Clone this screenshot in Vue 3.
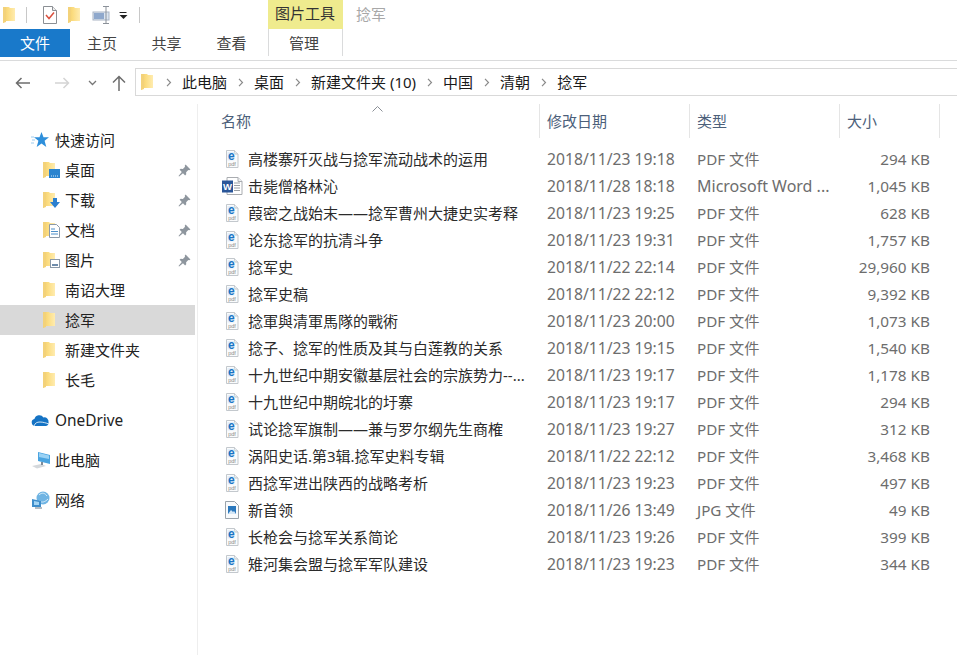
<script setup>
const crumbs = ['此电脑', '桌面', '新建文件夹 (10)', '中国', '清朝', '捻军']
const quick = [
  { name: '桌面', icon: 'desk', pin: true },
  { name: '下载', icon: 'down', pin: true },
  { name: '文档', icon: 'docs', pin: true },
  { name: '图片', icon: 'pics', pin: true },
  { name: '南诏大理', icon: '' },
  { name: '捻军', icon: '', active: true },
  { name: '新建文件夹', icon: '' },
  { name: '长毛', icon: '' },
]
const files = [
  ['pdf', '高楼寨歼灭战与捻军流动战术的运用', '2018/11/23 19:18', 'PDF 文件', '294 KB'],
  ['word', '击毙僧格林沁', '2018/11/28 18:18', 'Microsoft Word ...', '1,045 KB'],
  ['pdf', '葭密之战始末——捻军曹州大捷史实考释', '2018/11/23 19:25', 'PDF 文件', '628 KB'],
  ['pdf', '论东捻军的抗清斗争', '2018/11/23 19:31', 'PDF 文件', '1,757 KB'],
  ['pdf', '捻军史', '2018/11/22 22:14', 'PDF 文件', '29,960 KB'],
  ['pdf', '捻军史稿', '2018/11/22 22:12', 'PDF 文件', '9,392 KB'],
  ['pdf', '捻軍與清軍馬隊的戰術', '2018/11/23 20:00', 'PDF 文件', '1,073 KB'],
  ['pdf', '捻子、捻军的性质及其与白莲教的关系', '2018/11/23 19:15', 'PDF 文件', '1,540 KB'],
  ['pdf', '十九世纪中期安徽基层社会的宗族势力--...', '2018/11/23 19:17', 'PDF 文件', '1,178 KB'],
  ['pdf', '十九世纪中期皖北的圩寨', '2018/11/23 19:17', 'PDF 文件', '294 KB'],
  ['pdf', '试论捻军旗制——兼与罗尔纲先生商榷', '2018/11/23 19:27', 'PDF 文件', '312 KB'],
  ['pdf', '涡阳史话.第3辑.捻军史料专辑', '2018/11/22 22:12', 'PDF 文件', '3,468 KB'],
  ['pdf', '西捻军进出陕西的战略考析', '2018/11/23 19:23', 'PDF 文件', '497 KB'],
  ['jpg', '新首领', '2018/11/26 13:49', 'JPG 文件', '49 KB'],
  ['pdf', '长枪会与捻军关系简论', '2018/11/23 19:26', 'PDF 文件', '399 KB'],
  ['pdf', '雉河集会盟与捻军军队建设', '2018/11/23 19:23', 'PDF 文件', '344 KB'],
]
</script>

<template>
  <div class="win">
    <svg class="defs" aria-hidden="true">
      <defs>
        <linearGradient id="fg" x1="0" y1="0" x2="1" y2="0">
          <stop offset="0" stop-color="#f2cc68" />
          <stop offset="0.4" stop-color="#fbdc80" />
          <stop offset="1" stop-color="#ffecb0" />
        </linearGradient>
        <symbol id="folder" viewBox="0 0 12 16">
          <path d="M0 0h6l1 1h5v13H3l-3 2z" fill="url(#fg)" />
          <path d="M0 0h3v15l-3 1z" fill="#f3d27a" />
        </symbol>
        <symbol id="pdf" viewBox="0 0 14 18">
          <path d="M1.500 .5h8l3.500 3.500v13.500h-11.500z" fill="#fafbfc" stroke="#c3c8cd" />
          <path d="M9.500 .5v3.500h3.500" fill="#e8ecf0" stroke="#c3c8cd" />
          <rect x="2.500" y="2" width="7" height="8.500" fill="#e3f0fa" />
          <text x="6.300" y="10" font-size="12" font-weight="700" fill="#1b74c4" text-anchor="middle" font-family="Liberation Sans">e</text>
          <text x="7" y="15.800" font-size="5.500" fill="#8a8a8a" text-anchor="middle" font-family="Liberation Sans">pdf</text>
        </symbol>
        <symbol id="word" viewBox="0 0 22 18">
          <path d="M6 .5h11l4 4v13H6z" fill="#fff" stroke="#a9acb0" />
          <path d="M17 .5v4h4" fill="#eef0f2" stroke="#a9acb0" />
          <path d="M13 6h6M13 8.500h6M13 11h6M13 13.500h6" stroke="#9a9fa5" />
          <rect x="1" y="3.500" width="11" height="12" fill="#2a5699" />
          <text x="6.500" y="13" font-size="9.500" font-weight="700" fill="#fff" text-anchor="middle" font-family="Liberation Sans">W</text>
        </symbol>
        <symbol id="jpg" viewBox="0 0 14 18">
          <path d="M.5 .5h9l4 4v13H.5z" fill="#f8fafc" stroke="#9aa3ab" />
          <rect x="3" y="5" width="8" height="8" fill="#2a78bd" />
          <path d="M3 13l3-4 2 2 1-1 2 3z" fill="#d5e7f6" />
        </symbol>
        <symbol id="pin" viewBox="0 0 12 12">
          <path d="M7 .5l4.500 4.500-1.200.8-.8-.3-2 2 .1 2-1 1-2-2L1 11.500l-.5-.5 3-3.600-2-2 1-1 2 .1 2-2-.3-.8z" fill="#8e969e" />
        </symbol>
      </defs>
    </svg>

    <div class="title">
      <svg class="qa f1" width="12" height="16"><use href="#folder" /></svg>
      <i class="vsep s1"></i>
      <svg class="qa q2" width="16" height="18" viewBox="0 0 16 18">
        <path d="M1.500 .5h9l4 4v13h-13z" fill="#fff" stroke="#8b8f94" />
        <path d="M10.500 .5v4h4" fill="#eee" stroke="#8b8f94" />
        <path d="M4 9l3 3.500 5-6" fill="none" stroke="#d9503f" stroke-width="1.500" />
      </svg>
      <svg class="qa q3" width="12" height="16"><use href="#folder" /></svg>
      <svg class="qa q4" width="19" height="18" viewBox="0 0 19 18">
        <rect x="1" y="6" width="16" height="8" fill="#dbe5f1" stroke="#a9b4c4" />
        <rect x="2" y="7" width="10" height="6" fill="#8fa8cc" />
        <path d="M11 .5h6M14 .5v17M11 17.500h6" stroke="#8b9199" fill="none" />
      </svg>
      <svg class="qa q5" width="9" height="7" viewBox="0 0 9 7">
        <path d="M.500 .5h7" stroke="#222" />
        <path d="M.500 3h8l-4 4z" fill="#222" />
      </svg>
      <i class="vsep s2"></i>
      <div class="tool">图片工具</div>
      <div class="wintitle">捻军</div>
    </div>

    <div class="tabs">
      <div class="tab file">文件</div>
      <div class="tab t1">主页</div>
      <div class="tab t2">共享</div>
      <div class="tab t2">查看</div>
      <div class="tab manage">管理</div>
    </div>

    <div class="nav">
      <svg class="ni back" width="16" height="12" viewBox="0 0 16 12"><path d="M15 6H1.500M6.500 1l-5 5 5 5" fill="none" stroke="#6d6d6d" stroke-width="1.500" /></svg>
      <svg class="ni fwd" width="16" height="12" viewBox="0 0 16 12"><path d="M1 6h13.500M9.500 1l5 5-5 5" fill="none" stroke="#d4d4d4" stroke-width="1.500" /></svg>
      <svg class="ni dn" width="9" height="6" viewBox="0 0 9 6"><path d="M1 1l3.500 3.500L8 1" fill="none" stroke="#777" stroke-width="1.300" /></svg>
      <svg class="ni up" width="14" height="16" viewBox="0 0 14 16"><path d="M7 16V1.500M1 7.500l6-6 6 6" fill="none" stroke="#6d6d6d" stroke-width="1.500" /></svg>
      <div class="addr">
        <svg class="addr-f" width="12" height="16"><use href="#folder" /></svg>
        <template v-for="c in crumbs" :key="c">
          <svg class="chev" width="6" height="9" viewBox="0 0 6 9"><path d="M1 .8l3.500 3.700L1 8.200" fill="none" stroke="#8a8a8a" stroke-width="1.200" /></svg>
          <span class="crumb">{{ c }}</span>
        </template>
      </div>
    </div>

    <div class="body">
      <aside class="side">
        <div class="item top">
          <svg class="ticon" width="20" height="16" viewBox="0 0 20 16">
            <path d="M10.500 0l2 5.300H18l-4.400 3.500L15.300 15l-4.800-3.400L5.700 15l1.700-6.200L3 5.300h5.500z" fill="#2e8fdb" />
            <path d="M0 5h3M1 8h3M0 11h3" stroke="#9ccbee" />
          </svg>
          <span>快速访问</span>
        </div>
        <div v-for="q in quick" :key="q.name" class="item sub" :class="{ active: q.active }">
          <span class="fwrap">
            <svg width="12" height="16"><use href="#folder" /></svg>
            <svg v-if="q.icon === 'desk'" class="ov" width="11" height="9" viewBox="0 0 11 9"><rect width="11" height="9" fill="#2b84cf" /><path d="M2 7h7" stroke="#d7ebfb" stroke-dasharray="1 1" /></svg>
            <svg v-if="q.icon === 'down'" class="ov" width="10" height="10" viewBox="0 0 10 10"><path d="M3 0h4v4h3L5 10 0 4h3z" fill="#2b7fd0" /></svg>
            <svg v-if="q.icon === 'docs'" class="ov" width="11" height="14" viewBox="0 0 11 14"><path d="M.5.5h7l3 3v10H.5z" fill="#fff" stroke="#8b99a8" /><path d="M2 5h4M2 7.500h7M2 10h7" stroke="#4d8fc9" /></svg>
            <svg v-if="q.icon === 'pics'" class="ov" width="10" height="9" viewBox="0 0 10 9"><rect x=".5" y=".5" width="9" height="8" fill="#fff" stroke="#8b99a8" /><path d="M2 5h6v2H2z" fill="#6f8cab" /></svg>
          </span>
          <span class="lbl">{{ q.name }}</span>
          <svg v-if="q.pin" class="pin" width="13" height="13"><use href="#pin" /></svg>
        </div>
        <div class="item top gap">
          <svg class="ticon" width="20" height="12" viewBox="0 0 20 12">
            <path d="M4 12a3.500 3.500 0 0 1-.6-6.900A5 5 0 0 1 12.500 3.500 4 4 0 0 1 17.500 8 3 3 0 0 1 15 12z" fill="#1573c4" />
            <path d="M3 12c1-3 3-4 6-4s6 1 9 2" fill="none" stroke="#fff" stroke-width=".8" />
          </svg>
          <span class="latin">OneDrive</span>
        </div>
        <div class="item top gap">
          <svg class="ticon" width="20" height="18" viewBox="0 0 20 18">
            <path d="M7 1l12 3v9L7 10z" fill="#4aa4e0" />
            <path d="M8 2l10 2.500V8L8 6z" fill="#9ad2f5" />
            <path d="M1 15l9-2 5 2-9 2.500z" fill="#d4d8dc" />
            <path d="M11 11v3" stroke="#7f8c99" stroke-width="2" />
          </svg>
          <span>此电脑</span>
        </div>
        <div class="item top gap">
          <svg class="ticon" width="20" height="18" viewBox="0 0 20 18">
            <circle cx="12" cy="7" r="6.500" fill="#6fb4e3" />
            <path d="M8 4c3-3 6-2 8 1M8 10c3 2 6 1 9-2" fill="none" stroke="#d8eefb" />
            <path d="M1 8l9 2v6H1z" fill="#3f8ecb" />
            <path d="M3 10l5 1v3H3z" fill="#a4d5f4" />
            <path d="M4 17h7" stroke="#9aa4ae" stroke-width="1.500" />
          </svg>
          <span>网络</span>
        </div>
      </aside>

      <main class="list">
        <div class="head">
          <div class="h h-name">名称
            <svg class="sort" width="11" height="6" viewBox="0 0 11 6"><path d="M.5 5.500l5-5 5 5" fill="none" stroke="#8a8f96" /></svg>
          </div>
          <div class="h">修改日期</div>
          <div class="h">类型</div>
          <div class="h">大小</div>
        </div>
        <div class="rows">
          <div v-for="f in files" :key="f[1]" class="row">
            <div class="c-name">
              <svg v-if="f[0] === 'word'" class="wicon" width="22" height="18"><use href="#word" /></svg>
              <svg v-else class="ficon" width="14" height="18"><use :href="'#' + f[0]" /></svg>
              <span class="fname">{{ f[1] }}</span>
            </div>
            <div class="c-meta c-date">{{ f[2] }}</div>
            <div class="c-meta" :class="f[0] === 'word' ? 'c-long' : 'c-type'">{{ f[3] }}</div>
            <div class="c-meta c-size">{{ f[4] }}</div>
          </div>
        </div>
      </main>
    </div>
  </div>
</template>

<style scoped>
.win {
  width: 957px;
  height: 655px;
  overflow: hidden;
  display: flex;
  flex-direction: column;
  background: #fff;
  color: #1a1a1a;
  font-family: "Noto Sans", "Noto Sans CJK SC", sans-serif;
  font-size: 15px;
}
.defs { position: absolute; width: 0; height: 0; }
.title { height: 29px; display: flex; align-items: center; flex: none; }
.qa { flex: none; }
.f1 { margin-left: 3px; }
.vsep { width: 1px; height: 16px; background: #c8c8c8; flex: none; }
.s1 { margin-left: 11px; }
.q2 { margin-left: 15px; }
.q3 { margin-left: 10px; }
.q4 { margin-left: 12px; }
.q5 { margin-left: 8px; margin-top: 2px; }
.s2 { margin-left: 11px; }
.tool {
  margin-left: 128px;
  width: 74px;
  padding-right: 1px;
  height: 29px;
  background: #efeb8e;
  text-align: center;
  line-height: 27px;
  color: #333;
}
.wintitle { margin-left: 13px; margin-bottom: 2px; color: #a8a8a8; }
.tabs {
  flex: none;
  display: flex;
  border-bottom: 1px solid #dadbdc;
  box-sizing: border-box;
  height: 32px;
  color: #444;
}
.tab { height: 28px; line-height: 29px; text-align: center; }
.file { width: 70px; background: #1979ca; color: #fff; }
.t1 { width: 64px; }
.t2 { width: 65px; }
.manage {
  margin-left: 4px;
  width: 70px;
  padding-right: 3px;
  height: 27px;
  border-left: 1px solid #dadbdc;
  border-right: 1px solid #dadbdc;
}
.nav {
  height: 43px;
  flex: none;
  display: flex;
  align-items: center;
}
.ni { flex: none; }
.back { margin-left: 15px; }
.fwd { margin-left: 23px; }
.dn { margin-left: 18px; }
.up { margin-left: 15px; margin-top: 1px; }
.addr {
  margin-left: 9px;
  flex: 1;
  height: 28px;
  margin-top: -1px;
  box-sizing: border-box;
  border: 1px solid #d9d9d9;
  border-right: 0;
  display: flex;
  align-items: center;
}
.addr-f { margin-left: 5px; margin-right: 2px; flex: none; }
.chev { margin-left: 11px; flex: none; }
.crumb { margin-left: 10px; margin-bottom: 2px; white-space: nowrap; }
.body { flex: 1; display: flex; min-height: 0; }
.side {
  width: 198px;
  flex: none;
  box-sizing: border-box;
  border-right: 1px solid #eeeeee;
  padding-top: 21px;
  color: #222;
}
.item { height: 30px; display: flex; align-items: center; margin-right: 2px; }
.item.active { background: #d9d9d9; }
.top { padding-left: 31px; }
.top span { margin-left: 4px; margin-bottom: 2px; }
.top .latin { font-size: 15.4px; margin-bottom: 0; }
.ticon { flex: none; }
.gap { margin-top: 10px; }
.sub { padding-left: 43px; }
.fwrap { width: 17px; height: 16px; position: relative; display: block; flex: none; }
.fwrap svg { display: block; }
.ov { position: absolute; right: 0; bottom: 0; }
.lbl { margin-left: 5px; margin-bottom: 2px; flex: 1; }
.pin { margin-right: 4px; flex: none; }
.list { flex: 1; min-width: 0; }
.head {
  display: grid;
  grid-template-columns: 342px 150px 150px 100px;
  height: 33px;
  color: #4c607a;
}
.h {
  position: relative;
  padding-left: 7px;
  line-height: 34px;
  border-right: 1px solid #e5e5e5;
  box-sizing: border-box;
}
.h-name { padding-left: 23px; }
.sort { position: absolute; left: 174px; top: 2px; }
.rows { padding-top: 8px; }
.row {
  display: grid;
  grid-template-columns: 342px 150px 150px 100px;
  height: 27px;
  align-items: center;
}
.c-name { display: flex; align-items: center; padding-left: 27px; min-width: 0; }
.ficon { flex: none; }
.wicon { flex: none; margin-left: -4px; margin-right: -4px; }
.fname { margin-left: 9px; white-space: nowrap; color: #2b2b2b; }
.c-meta { padding-left: 7px; color: #6d6d6d; white-space: nowrap; }
.c-date { font-size: 15.7px; }
.c-type { font-size: 15.2px; margin-bottom: 2px; }
.c-long { font-size: 16px; }
.c-size { text-align: right; padding-right: 10px; padding-left: 0; font-size: 15.3px; }
</style>
